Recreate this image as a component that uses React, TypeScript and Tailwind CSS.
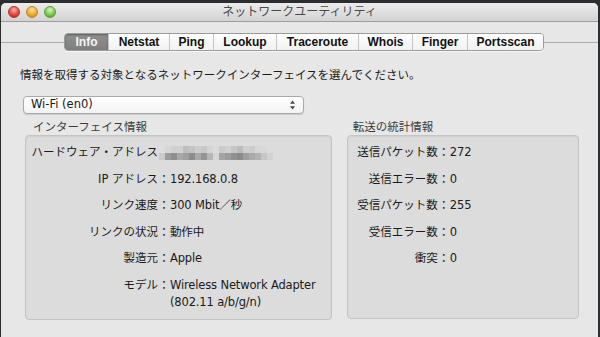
import React from 'react';

const tabs = [
  { name: 'Info', w: 'w-[43px]', active: true },
  { name: 'Netstat', w: 'w-[61px]' },
  { name: 'Ping', w: 'w-[44px]' },
  { name: 'Lookup', w: 'w-[63px]' },
  { name: 'Traceroute', w: 'w-[82px]' },
  { name: 'Whois', w: 'w-[54px]' },
  { name: 'Finger', w: 'w-[55px]' },
  { name: 'Portsscan', w: 'w-[76px]' },
];

const infoRows = [
  { label: 'IP アドレス', value: ['192.168.0.8'] },
  { label: 'リンク速度', value: ['300 Mbit／秒'] },
  { label: 'リンクの状況', value: ['動作中'] },
  { label: '製造元', value: ['Apple'] },
  { label: 'モデル', value: ['Wireless Network Adapter', '(802.11 a/b/g/n)'] },
];

const statRows = [
  { label: '送信パケット数', value: '272' },
  { label: '送信エラー数', value: '0' },
  { label: '受信パケット数', value: '255' },
  { label: '受信エラー数', value: '0' },
  { label: '衝突', value: '0' },
];

// pixelated (hidden) MAC address
const macTop = ['#dddddd', '#d6d6d6', '#d0d0d0', '#cfcfcf', '#bdbdbd', '#c4c4c4', '#cdcdcd', '#c8c8c8', '#d4d4d4', '#dadada', '#cbcbcb', '#d0d0d0', '#c6c6c6', '#bcbcbc', '#cfcfcf', '#cbcbcb', '#d6d6d6', '#d8d8d8', '#dcdcdc'];
const macBottom = ['#cacaca', '#9c9c9c', '#8e8e8e', '#a8a8a8', '#a0a0a0', '#8c8c8c', '#aaaaaa', '#949494', '#b6b6b6', '#d6d6d6', '#a4a4a4', '#9c9c9c', '#909090', '#8a8a8a', '#9e9e9e', '#aaaaaa', '#b2b2b2', '#c6c6c6', '#d2d2d2'];

const Light = ({ cls }: { cls: string }) => (
  <div className={`w-[12px] h-[12px] rounded-full ${cls}`} />
);

const App = () => {
  return (
    <div className="w-[600px] h-[337px] bg-[#2c2d30] overflow-hidden font-['DejaVu_Sans','Noto_Sans_CJK_JP',sans-serif] text-[11.5px] text-[#1a1a1a]">
      <div className="ml-[1px] mt-[3px] w-[597px] h-[334px] bg-[#e7e7e7] rounded-t-[5px] flex flex-col">
        {/* Title bar */}
        <div className="relative h-[19px] rounded-t-[5px] bg-gradient-to-b from-[#ececec] to-[#d3d3d3] border-b border-[#9d9d9d] flex items-center">
          <div className="flex items-center gap-[6px] pl-[7px]">
            <Light cls="bg-[radial-gradient(circle_at_50%_30%,#ffb4ae,#e8453f_55%,#a92a25)] border border-[#b4332e]" />
            <Light cls="bg-[radial-gradient(circle_at_50%_30%,#ffe3a6,#f0a92e_55%,#b97a13)] border border-[#c08a20]" />
            <Light cls="bg-[radial-gradient(circle_at_50%_30%,#d8f7c4,#7ccb52_55%,#4a8e2b)] border border-[#5e9c3a]" />
          </div>
          <div className="absolute inset-0 flex items-center justify-center text-[12px] text-[#4a4a4a]">
            ネットワークユーティリティ
          </div>
        </div>

        {/* Tabs */}
        <div className="mt-[11px] flex items-center">
          <div className="w-[63px] h-px bg-[#acacac]" />
          <div className="flex h-[18px] rounded-[4px] border border-[#9b9b9b] overflow-hidden shadow-[0_1px_0_rgba(255,255,255,0.7)] font-['Liberation_Sans',sans-serif] font-bold text-[12px]">
            {tabs.map((t, i) => (
              <div
                key={t.name}
                className={`${t.w} flex items-center justify-center ${i > 0 ? 'border-l border-[#c4c4c4]' : ''} ${
                  t.active
                    ? 'bg-gradient-to-b from-[#8f8f8f] to-[#7f7f7f] text-[#f5f5f5] shadow-[inset_0_1px_2px_rgba(0,0,0,0.35)]'
                    : 'bg-gradient-to-b from-[#ffffff] to-[#f1f1f1] text-[#111]'
                }`}
              >
                {t.name}
              </div>
            ))}
          </div>
          <div className="flex-1 h-px bg-[#acacac]" />
        </div>

        {/* Content */}
        <div className="px-[19px]">
          <div className="mt-[16px] leading-[16px]">
            情報を取得する対象となるネットワークインターフェイスを選んでください。
          </div>

          <div className="mt-[13px] ml-[3px] w-[281px] h-[18px] rounded-[4px] border border-[#a9a9a9] bg-gradient-to-b from-[#ffffff] to-[#f3f3f3] shadow-[0_1px_1px_rgba(0,0,0,0.12)] flex items-center justify-between pl-[7px] pr-[7px]">
            <span>Wi-Fi (en0)</span>
            <svg width="7" height="10" viewBox="0 0 7 10">
              <path d="M3.5 0.5 L6 3.8 H1 Z" fill="#444" />
              <path d="M3.5 9.5 L6 6.2 H1 Z" fill="#444" />
            </svg>
          </div>

          <div className="mt-[6px] flex gap-[15px] ml-[5px]">
            {/* Interface info */}
            <div className="w-[309px] flex flex-col">
              <div className="pl-[8px] h-[15px] leading-[14px] text-[#3c3c3c]">インターフェイス情報</div>
              <div className="h-[185px] rounded-[4px] border border-[#c4c4c4] bg-[#dcdcdc] shadow-[inset_0_1px_2px_rgba(0,0,0,0.06)] pt-[8px]">
                <div className="grid grid-cols-[132px_12px_1fr] gap-y-[9.5px] leading-[17px]">
                  <div className="text-right whitespace-nowrap">ハードウェア・アドレス</div>
                  <div className="col-span-2 flex flex-col justify-center pl-[1px]">
                    <div className="flex">
                      {macTop.map((c, i) => (
                        <div key={i} className="w-[6px] h-[7px]" style={{ backgroundColor: c }} />
                      ))}
                    </div>
                    <div className="flex">
                      {macBottom.map((c, i) => (
                        <div key={i} className="w-[6px] h-[7px]" style={{ backgroundColor: c }} />
                      ))}
                    </div>
                  </div>
                  {infoRows.map((r) => (
                    <React.Fragment key={r.label}>
                      <div className="text-right whitespace-nowrap">{r.label}</div>
                      <div className="text-center">：</div>
                      <div className="tracking-[-0.15px]">
                        {r.value.map((v) => (
                          <div key={v}>{v}</div>
                        ))}
                      </div>
                    </React.Fragment>
                  ))}
                </div>
              </div>
            </div>

            {/* Transfer stats */}
            <div className="w-[234px] flex flex-col">
              <div className="pl-[6px] h-[15px] leading-[14px] text-[#3c3c3c]">転送の統計情報</div>
              <div className="h-[184px] rounded-[4px] border border-[#c4c4c4] bg-[#dcdcdc] shadow-[inset_0_1px_2px_rgba(0,0,0,0.06)] pt-[8px]">
                <div className="grid grid-cols-[90px_12px_1fr] gap-y-[9.5px] leading-[17px]">
                  {statRows.map((r) => (
                    <React.Fragment key={r.label}>
                      <div className="text-right whitespace-nowrap">{r.label}</div>
                      <div className="text-center">：</div>
                      <div>{r.value}</div>
                    </React.Fragment>
                  ))}
                </div>
              </div>
            </div>
          </div>
        </div>
      </div>
    </div>
  );
};

export default App;
